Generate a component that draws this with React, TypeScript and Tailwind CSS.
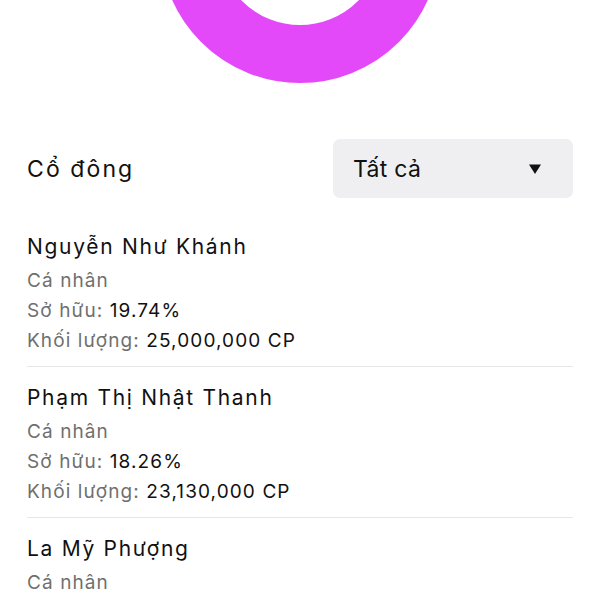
import React from "react";

type Holder = { name: string; type: string; own?: string; vol?: string };

const holders: Holder[] = [
  { name: "Nguyễn Như Khánh", type: "Cá nhân", own: "19.74%", vol: "25,000,000 CP" },
  { name: "Phạm Thị Nhật Thanh", type: "Cá nhân", own: "18.26%", vol: "23,130,000 CP" },
  { name: "La Mỹ Phượng", type: "Cá nhân" },
];

export default function App() {
  return (
    <div
      className="w-[600px] h-[600px] overflow-hidden bg-white text-[#111111]"
      style={{ fontFamily: "Inter, 'Noto Sans', sans-serif" }}
    >
      <div className="h-[100px] w-full">
        <svg width="600" height="100" viewBox="0 0 600 100">
          <circle cx="300" cy="-57" r="111" fill="none" stroke="#e449f9" strokeWidth="58" />
        </svg>
      </div>
      <div className="px-[27px]">
        <div className="mt-[39px] flex items-center justify-between">
          <div className="text-[23px] leading-[30px] tracking-[2.1px]">Cổ đông</div>
          <div className="w-[240px] h-[59px] rounded-[7px] bg-[#efeff1] flex items-center justify-between pl-[20px] pr-[31px]">
            <span className="text-[23px] leading-[30px] tracking-[0.3px]">Tất cả</span>
            <svg width="14" height="10" viewBox="0 0 14 10">
              <path d="M1 0.5 H13 L7 10 Z" fill="#111111" />
            </svg>
          </div>
        </div>
        <div className="mt-[18px]">
          {holders.map((h, i) => (
            <div
              key={i}
              className={`pt-[17px] pb-[10px] ${i < holders.length - 1 ? "border-b border-[#e6e6e6]" : ""}`}
            >
              <div className="text-[21px] leading-[28px] mb-[5px] tracking-[1.7px] text-[#111111]">{h.name}</div>
              <div className="text-[19px] leading-[30px] tracking-[1.1px] text-[#6f6f6f]">{h.type}</div>
              {h.own && (
                <div className="text-[19px] leading-[30px] tracking-[1.1px] text-[#6f6f6f]">
                  Sở hữu: <span className="text-[#111111]">{h.own}</span>
                </div>
              )}
              {h.vol && (
                <div className="text-[19px] leading-[30px] tracking-[1.1px] text-[#6f6f6f]">
                  Khối lượng: <span className="text-[#111111]">{h.vol}</span>
                </div>
              )}
            </div>
          ))}
        </div>
      </div>
    </div>
  );
}
